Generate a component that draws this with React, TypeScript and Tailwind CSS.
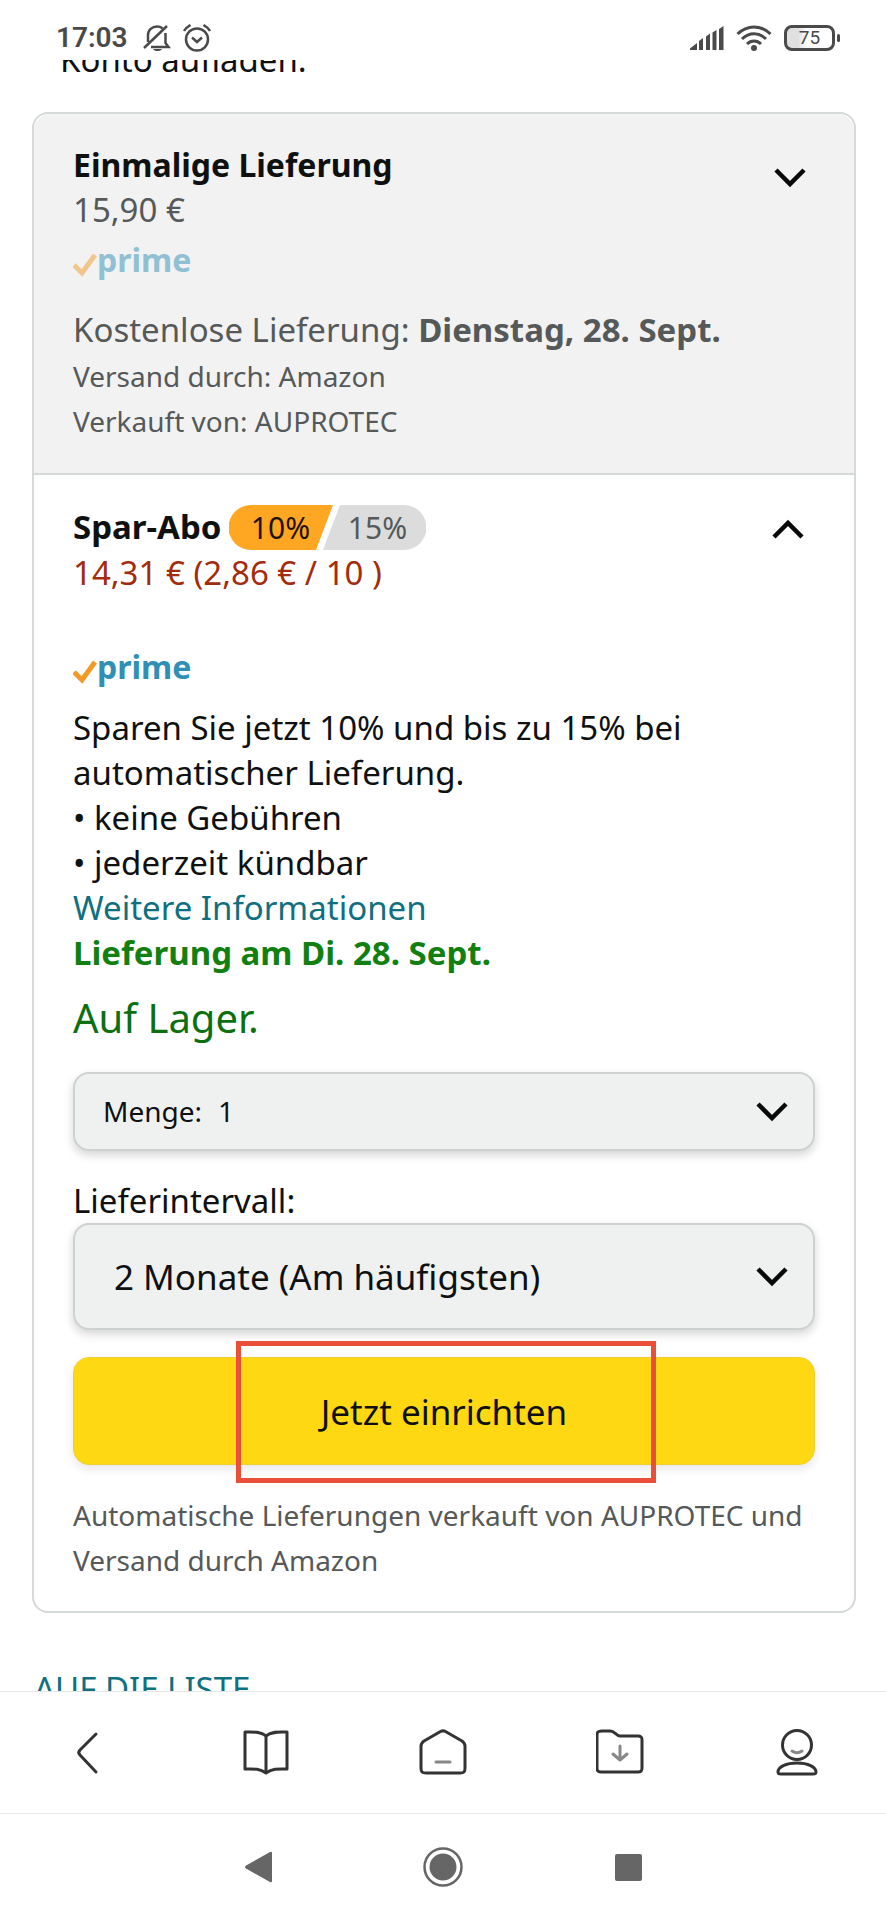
import { ReactNode, useState } from "react";

function Chevron({ up = false }: { up?: boolean }) {
  return (
    <svg className="h-5 w-8" viewBox="0 0 32 20" fill="none" stroke="#0a0a0a" strokeWidth={4.5}>
      {up ? <path d="M2 18L16 4l14 14" /> : <path d="M2 2l14 14L30 2" />}
    </svg>
  );
}

function PrimeLogo({ faded = false }: { faded?: boolean }) {
  return (
    <div className={`flex h-8 items-center ${faded ? "opacity-50" : ""}`}>
      <svg className="mt-3 h-6 w-6 shrink-0" viewBox="0 0 24 24" fill="none" stroke="#f39a26" strokeWidth={5}>
        <path d="M1 11l8 8L22 1" />
      </svg>
      <span className="text-[32px] leading-8 font-bold text-[#2f8fb5]">prime</span>
    </div>
  );
}

function StatusBar() {
  return (
    <header className="flex h-[60px] shrink-0 items-center justify-between bg-white pt-4 pr-[46px] pl-14 text-[#4a4a4a]">
      <div className="flex items-center">
        <span className="mr-[15px] font-[Roboto] text-[28px] leading-8 font-semibold">17:03</span>
        <svg className="mr-3 h-7 w-7" viewBox="0 0 28 28" fill="none" stroke="currentColor" strokeWidth={2.5}>
          <path d="M5 18V11c0-5 4-8.500 9-8.500 2 0 4 .6 5.500 1.700M22.500 9v10l3 4H8M1 24L24 2" />
          <path d="M10 25c1 1.500 2.500 2 4.500 2s3.500-.5 4.500-2z" fill="currentColor" stroke="none" />
        </svg>
        <svg className="h-7 w-7" viewBox="0 0 28 28" fill="none" stroke="currentColor" strokeWidth={2.5}>
          <circle cx="14" cy="15.500" r="11" />
          <path d="M9 13.500l5 4.500 5-4.500" strokeWidth={2.5} />
          <path d="M1 7c1.500-3 4-4.500 6.500-6M27 7c-1.500-3-4-4.500-6.500-6" strokeWidth={2.5} />
        </svg>
      </div>
      <div className="flex items-center gap-3">
        <svg className="h-6 w-[34px]" viewBox="0 0 34 24" fill="currentColor">
          <path d="M0 22.500L7 17v7H0zM9 15l4-3v12H9zM16 10.500l4-3V24h-4zM22.500 6.500l4-2.500v20h-4zM29 3l4.500-3v24H29z" />
        </svg>
        <svg className="h-[26px] w-9" viewBox="0 0 36 26" fill="none" stroke="currentColor" strokeWidth={3}>
          <path d="M1.500 9C11-.5 25-.5 34.500 9M6 14c7-7 17-7 24 0M11 19c4-4 10-4 14 0" />
          <circle cx="18" cy="23" r="3" fill="currentColor" stroke="none" />
        </svg>
        <div className="flex items-center gap-0.5">
          <div className="flex h-[26px] w-[51px] items-center justify-center rounded-lg border-3 border-current bg-linear-to-r from-[#e0e0e0] from-25% to-white to-45% font-[Roboto] text-[19px] leading-5">
            75
          </div>
          <div className="h-2 w-[3px] rounded-sm bg-current" />
        </div>
      </div>
    </header>
  );
}

function DiscountBadge() {
  return (
    <div className="relative mt-0.5 flex h-[45px] w-[197px] items-center text-[30px] leading-[45px]">
      <svg className="absolute inset-0 h-full w-full" viewBox="0 0 197 45">
        <path d="M22 0h82L87 45H22a22 22 0 010-45z" fill="#ffa723" />
        <path d="M111 0h64a22 22 0 010 45H94z" fill="#dcdcdc" />
      </svg>
      <span className="relative w-[102px] text-center text-[#1f1300]">10%</span>
      <span className="relative w-[92px] text-center text-[#565959]">15%</span>
    </div>
  );
}

function SelectArrow() {
  return (
    <span className="pointer-events-none absolute inset-y-0 right-[25px] flex items-center">
      <Chevron />
    </span>
  );
}

function NavButton({ label, children }: { label: string; children: ReactNode }) {
  return (
    <button aria-label={label} className="flex h-full flex-1 items-center justify-center text-[#333]">
      <svg
        className="h-12 w-12"
        viewBox="0 0 48 48"
        fill="none"
        stroke="currentColor"
        strokeWidth={3}
        strokeLinecap="round"
        strokeLinejoin="round"
      >
        {children}
      </svg>
    </button>
  );
}

export default function App() {
  const [quantity, setQuantity] = useState("1");
  const [interval, setInterval] = useState("2");

  return (
    <div className="flex h-screen flex-col bg-white font-['Noto_Sans',sans-serif] text-[33px] leading-[45px] text-[#0f1111]">
      <StatusBar />

      <main className="min-h-0 flex-1 overflow-hidden pr-[30px] pl-8">
        <p className="-mt-[23px] pl-7">Konto aufladen.</p>

        <div className="mt-[30px] rounded-2xl border-2 border-[#d5d9d9]">
          {/* One-time delivery */}
          <section className="relative rounded-t-2xl border-b-2 border-[#d5d9d9] bg-[#f2f2f2] px-[39px] pt-7 pb-[29px] text-[#565959]">
            <h2 className="text-[32px] font-bold text-[#0f1111]">Einmalige Lieferung</h2>
            <p>15,90 €</p>
            <div className="mt-3 mb-[31px]">
              <PrimeLogo faded />
            </div>
            <p>
              Kostenlose Lieferung: <strong>Dienstag, 28. Sept.</strong>
            </p>
            <div className="mt-0.5 text-[28px]">
              <p>Versand durch: Amazon</p>
              <p>Verkauft von: AUPROTEC</p>
            </div>
            <button aria-label="Einmalige Lieferung" className="absolute top-[54px] right-12">
              <Chevron />
            </button>
          </section>

          {/* Subscription */}
          <section className="relative px-[39px] pt-7 pb-7">
            <div className="flex items-center gap-2">
              <h2 className="font-bold">Spar-Abo</h2>
              <DiscountBadge />
            </div>
            <p className="text-[#a32c0d]">14,31 € (2,86 € / 10 )</p>
            <button aria-label="Spar-Abo" className="absolute top-[44px] right-[50px]">
              <Chevron up />
            </button>

            <div className="mt-14 mb-[22px]">
              <PrimeLogo />
            </div>

            <p>Sparen Sie jetzt 10% und bis zu 15% bei automatischer Lieferung.</p>
            <ul>
              <li>• keine Gebühren</li>
              <li>• jederzeit kündbar</li>
            </ul>
            <a href="#info" className="block text-[#0f7080]">
              Weitere Informationen
            </a>
            <p className="font-bold text-[#118011]">Lieferung am Di. 28. Sept.</p>
            <p className="mt-4 text-[40px] leading-[53px] text-[#0b7010]">Auf Lager.</p>

            <div className="relative mt-7 flex h-[79px] items-center rounded-2xl border-2 border-[#cdd1d1] bg-[#eff1f1] pl-7 text-[28px] shadow-[0_4px_10px_rgba(15,17,17,0.18)]">
              <label htmlFor="quantity">Menge:</label>
              <select
                id="quantity"
                value={quantity}
                onChange={(e) => setQuantity(e.target.value)}
                className="h-full flex-1 appearance-none bg-transparent pl-4"
              >
                <option value="1">1</option>
                <option value="2">2</option>
                <option value="3">3</option>
              </select>
              <SelectArrow />
            </div>

            <label htmlFor="interval" className="mt-[27px] block">
              Lieferintervall:
            </label>
            <div className="relative h-[107px] rounded-2xl border-2 border-[#cdd1d1] bg-[#eff1f1] text-[35px] shadow-[0_4px_10px_rgba(15,17,17,0.18)]">
              <select
                id="interval"
                value={interval}
                onChange={(e) => setInterval(e.target.value)}
                className="h-full w-full appearance-none bg-transparent pl-[39px]"
              >
                <option value="1">1 Monat</option>
                <option value="2">2 Monate (Am häufigsten)</option>
                <option value="3">3 Monate</option>
              </select>
              <SelectArrow />
            </div>

            <div className="relative mt-[27px]">
              <button className="h-[108px] w-full rounded-2xl border border-[#f0cf30] bg-[#fdd813] text-[35px] shadow-[0_4px_10px_rgba(15,17,17,0.1)]">
                Jetzt einrichten
              </button>
              <div className="pointer-events-none absolute -top-4 right-[159px] -bottom-[18px] left-[163px] border-5 border-[#ea5039]" />
            </div>

            <p className="mt-7 text-[28px] text-[#565959]">
              Automatische Lieferungen verkauft von AUPROTEC und Versand durch Amazon
            </p>
          </section>
        </div>

        <a href="#list" className="mt-[53px] block pl-0.5 text-[#0f7080]">
          AUF DIE LISTE
        </a>
      </main>

      {/* Browser toolbar */}
      <nav className="flex h-[122px] shrink-0 items-center border-t border-[#e8e8e8] bg-white">
        <NavButton label="Zurück">
          <path d="M31 5L15 21c-1.500 1.500-1.500 3.500 0 5l16 17" />
        </NavButton>
        <NavButton label="Lesezeichen">
          <path d="M24 7C18 2 10 3 3 3v37c7 0 14-1 21 4 7-5 14-4 21-4V3c-7 0-15-1-21 4zM24 7v36" />
        </NavButton>
        <NavButton label="Startseite">
          <path d="M21.500 2.500L5 12c-2 1.500-3 3-3 5v22c0 4 1 5 5 5h34c4 0 5-1 5-5V17c0-2-1-3.500-3-5L26.500 2.500c-2-1-3-1-5 0z" />
          <path d="M17 33h14" stroke="#888" />
        </NavButton>
        <NavButton label="Downloads">
          <path d="M6 2h8c5 0 6 5 10 5h18c3 0 4 1 4 4v28c0 3-1 4-4 4H5c-3 0-4-1-4-4V6c0-3 1-4 5-4z" />
          <path d="M24 17v14M17 25l7 6 7-6" stroke="#888" />
        </NavButton>
        <NavButton label="Profil">
          <circle cx="24" cy="16" r="14.500" />
          <path d="M5 43c0-5 8-9 19-9s19 4 19 9c0 2-1 2-3 2H8c-2 0-3 0-3-2z" />
          <path d="M19 22c3 2 7 2 10 0" stroke="#888" />
        </NavButton>
      </nav>

      {/* System navigation */}
      <div className="flex h-[107px] shrink-0 items-center justify-center gap-36 border-t border-[#e8e8e8] bg-white text-[#666]">
        <button aria-label="System zurück">
          <svg className="h-10 w-10" viewBox="0 0 40 40" fill="currentColor">
            <path d="M7 18.500L31 5q2-1 2 1v28q0 2-2 1L7 21.500q-2-1.500 0-3z" />
          </svg>
        </button>
        <button aria-label="Home">
          <svg className="h-10 w-10" viewBox="0 0 40 40" fill="none" stroke="currentColor" strokeWidth={2.5}>
            <circle cx="20" cy="20" r="18.500" />
            <circle cx="20" cy="20" r="13.500" fill="currentColor" stroke="none" />
          </svg>
        </button>
        <button aria-label="Übersicht">
          <svg className="h-10 w-10" viewBox="0 0 40 40" fill="currentColor">
            <rect x="8" y="7" width="27" height="27" rx="2" />
          </svg>
        </button>
      </div>
    </div>
  );
}
